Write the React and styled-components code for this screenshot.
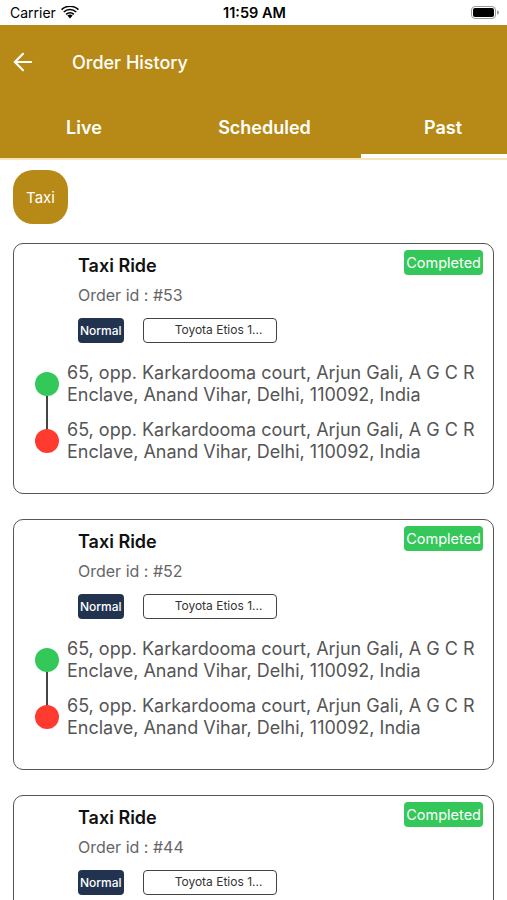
import React from "react";
import styled, { createGlobalStyle } from "styled-components";
import { ArrowLeft } from "lucide-react";

const GOLD = "#b78a17";

const orders = [{ id: 53 }, { id: 52 }, { id: 44 }];

const tabs = [
  { label: "Live", width: 168 },
  { label: "Scheduled", width: 193 },
  { label: "Past", width: 146, active: true },
];

const address =
  "65, opp. Karkardooma court, Arjun Gali, A G C R Enclave, Anand Vihar, Delhi, 110092, India";

const Wifi = () => (
  <svg width="18" height="13" viewBox="0 0 18 13">
    <path d="M9 12.5 L6.4 9.6 A3.8 3.8 0 0 1 11.6 9.6 Z" fill="#000" />
    <path d="M4.6 7.8 A6.4 6.4 0 0 1 13.4 7.8 L12.2 9 A4.7 4.7 0 0 0 5.8 9 Z" fill="#000" />
    <path d="M2.2 5.4 A9.8 9.8 0 0 1 15.8 5.4 L14.6 6.6 A8.1 8.1 0 0 0 3.4 6.6 Z" fill="#000" />
    <path d="M0 3.1 A13 13 0 0 1 18 3.1 L16.9 4.3 A11.4 11.4 0 0 0 1.1 4.3 Z" fill="#000" />
  </svg>
);

const Battery = () => (
  <svg width="28" height="13" viewBox="0 0 28 13">
    <rect x="0.5" y="0.5" width="24" height="12" rx="3.5" fill="none" stroke="#999" />
    <rect x="2" y="2" width="21" height="9" rx="2" fill="#000" />
    <path d="M26 4.5 a1.5 1.5 0 0 1 0 4 Z" fill="#999" />
  </svg>
);

const App = () => {
  return (
    <>
      <GlobalStyle />
      <Screen>
        <StatusBar>
          <Carrier>
            Carrier <Wifi />
          </Carrier>
          <Clock>11:59 AM</Clock>
          <BatteryWrap>
            <Battery />
          </BatteryWrap>
        </StatusBar>
        <Header>
          <TitleRow>
            <BackButton>
              <ArrowLeft size={28} strokeWidth={1.8} color="#fff" />
            </BackButton>
            <Title>Order History</Title>
          </TitleRow>
          <Tabs>
            {tabs.map((t) => (
              <Tab key={t.label} $width={t.width} $active={t.active}>
                {t.label}
              </Tab>
            ))}
          </Tabs>
        </Header>
        <Body>
          <Chip>Taxi</Chip>
          <CardList>
            {orders.map((o) => (
              <Card key={o.id}>
                <Info>
                  <TopRow>
                    <RideTitle>Taxi Ride</RideTitle>
                    <Status>Completed</Status>
                  </TopRow>
                  <OrderId>Order id : #{o.id}</OrderId>
                  <Tags>
                    <TypeTag>Normal</TypeTag>
                    <CarTag>Toyota Etios 1...</CarTag>
                  </Tags>
                </Info>
                <Route>
                  <Stop>
                    <Dot $color="#34c759" $first />
                    <Address>{address}</Address>
                  </Stop>
                  <Stop>
                    <Dot $color="#ff3b30" />
                    <Address>{address}</Address>
                  </Stop>
                </Route>
              </Card>
            ))}
          </CardList>
        </Body>
      </Screen>
    </>
  );
};

export default App;

const GlobalStyle = createGlobalStyle`
  body {
    margin: 0;
    background: #fff;
    font-family: Inter, "Noto Sans", "Liberation Sans", sans-serif;
  }
`;

const Screen = styled.div`
  width: 507px;
  height: 900px;
  overflow: hidden;
  background: #fff;
`;

const StatusBar = styled.div`
  height: 25px;
  display: grid;
  grid-template-columns: 1fr auto 1fr;
  align-items: center;
  padding: 0 8px 0 10px;
  font-size: 14px;
  color: #000;
`;

const Carrier = styled.div`
  display: flex;
  align-items: center;
  gap: 5px;
`;

const Clock = styled.div`
  font-weight: 600;
  font-size: 14.5px;
`;

const BatteryWrap = styled.div`
  display: flex;
  justify-content: flex-end;
`;

const Header = styled.div`
  background: ${GOLD};
  border-bottom: 2px solid #f4e5bd;
  color: #fff;
`;

const TitleRow = styled.div`
  height: 74px;
  display: flex;
  align-items: center;
  padding-left: 9px;
`;

const BackButton = styled.div`
  display: flex;
  align-items: center;
  width: 63px;
`;

const Title = styled.div`
  font-size: 18px;
  font-weight: 500;
`;

const Tabs = styled.div`
  height: 59px;
  display: flex;
`;

const Tab = styled.div`
  width: ${(p) => p.$width}px;
  box-sizing: border-box;
  display: flex;
  align-items: center;
  justify-content: center;
  font-size: 18px;
  font-weight: 600;
  padding-top: 2px;
  padding-left: ${(p) => (p.$active ? 18 : 0)}px;
  border-bottom: 4px solid ${(p) => (p.$active ? "#fff" : "transparent")};
`;

const Body = styled.div`
  padding: 10px 13px 0;
`;

const Chip = styled.div`
  width: 55px;
  height: 54px;
  border-radius: 20px;
  background: ${GOLD};
  color: #fff;
  font-size: 15px;
  display: flex;
  align-items: center;
  justify-content: center;
`;

const CardList = styled.div`
  margin-top: 19px;
  display: flex;
  flex-direction: column;
  gap: 25px;
`;

const Card = styled.div`
  height: 251px;
  box-sizing: border-box;
  border: 1.5px solid #555;
  border-radius: 10px;
  padding: 6px 10px 0 0;
  flex-shrink: 0;
`;

const Info = styled.div`
  padding-left: 64px;
`;

const TopRow = styled.div`
  display: flex;
  justify-content: space-between;
  align-items: flex-start;
`;

const RideTitle = styled.div`
  margin-top: 4px;
  font-size: 18px;
  font-weight: 600;
  line-height: 24px;
  color: #111;
`;

const Status = styled.div`
  height: 25px;
  padding: 0 2px;
  border-radius: 4px;
  background: #34c759;
  color: #fff;
  font-size: 14.5px;
  line-height: 25px;
`;

const OrderId = styled.div`
  margin-top: 6px;
  font-size: 16px;
  line-height: 22px;
  color: #666;
`;

const Tags = styled.div`
  margin-top: 12px;
  display: flex;
  gap: 19px;
`;

const TypeTag = styled.div`
  height: 25px;
  padding: 0 2px;
  border-radius: 4px;
  background: #22334f;
  color: #fff;
  font-size: 12px;
  font-weight: 500;
  line-height: 25px;
`;

const CarTag = styled.div`
  width: 134px;
  height: 25px;
  box-sizing: border-box;
  border: 1.5px solid #444;
  border-radius: 4px;
  font-size: 12px;
  line-height: 22px;
  color: #333;
  padding-left: 31px;
`;

const Route = styled.div`
  margin-top: 19px;
  padding-left: 21px;
  display: flex;
  flex-direction: column;
  gap: 13px;
`;

const Stop = styled.div`
  display: flex;
  align-items: center;
  gap: 8px;
`;

const Dot = styled.div`
  position: relative;
  width: 24px;
  height: 24px;
  border-radius: 50%;
  background: ${(p) => p.$color};
  flex-shrink: 0;

  &::after {
    content: "";
    display: ${(p) => (p.$first ? "block" : "none")};
    position: absolute;
    left: 11px;
    top: 24px;
    width: 2px;
    height: 34px;
    background: #444;
  }
`;

const Address = styled.div`
  font-size: 18px;
  line-height: 22px;
  color: #555;
`;
